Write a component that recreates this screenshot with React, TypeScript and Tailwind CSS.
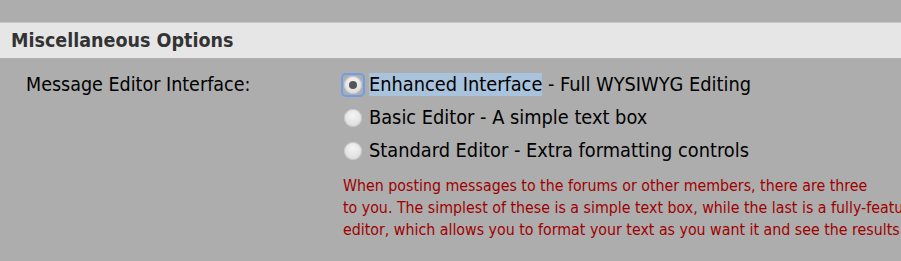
import React from "react";

const font = { fontFamily: '"DejaVu Sans Condensed", "DejaVu Sans", sans-serif' };

function Radio({ checked }: { checked?: boolean }) {
  return (
    <span className={`relative flex h-[20px] w-[20px] shrink-0 items-center justify-center rounded-[3px] ${checked ? "outline outline-2 outline-[#6f9ee8]" : ""}`}>
      <span className="flex h-[18px] w-[18px] items-center justify-center rounded-full bg-[radial-gradient(circle_at_50%_35%,#f4f4f4,#d6d6d6)] shadow-[inset_0_0_0_1px_#c4c4c4]">
        {checked && <span className="h-[8px] w-[8px] rounded-full bg-[#555]" />}
      </span>
    </span>
  );
}

export default function App() {
  return (
    <div className="h-[261px] w-[901px] overflow-hidden bg-[#adadad]" style={font}>
      <div className="h-[22px]" />
      <div className="flex h-[36px] items-center border-t border-[#c9c9c9] bg-[#e6e6e6] pl-[11px]">
        <span className="text-[19.5px] font-bold text-[#333]">Miscellaneous Options</span>
      </div>
      <div className="flex pt-[14px]">
        <div className="w-[343px] shrink-0 pl-[26px] text-[19.5px] leading-[26px] text-black">Message Editor Interface:</div>
        <div className="flex min-w-0 flex-col">
          <div className="flex flex-col gap-[7px] text-[19.8px] leading-[26px] text-black">
            <div className="flex items-center gap-[6px] whitespace-nowrap">
              <Radio checked />
              <span><span className="bg-[#a9c3dd]">Enhanced Interface</span> - Full WYSIWYG Editing</span>
            </div>
            <div className="flex items-center gap-[6px] whitespace-nowrap">
              <Radio />
              <span>Basic Editor - A simple text box</span>
            </div>
            <div className="flex items-center gap-[6px] whitespace-nowrap">
              <Radio />
              <span>Standard Editor - Extra formatting controls</span>
            </div>
          </div>
          <div className="mt-[11px] flex flex-col whitespace-nowrap text-[15.8px] leading-[22px] text-[#a00000]">
            <span>When posting messages to the forums or other members, there are three</span>
            <span>to you. The simplest of these is a simple text box, while the last is a fully-featured WYSIWYG</span>
            <span>editor, which allows you to format your text as you want it and see the results immediately.</span>
          </div>
        </div>
      </div>
    </div>
  );
}
